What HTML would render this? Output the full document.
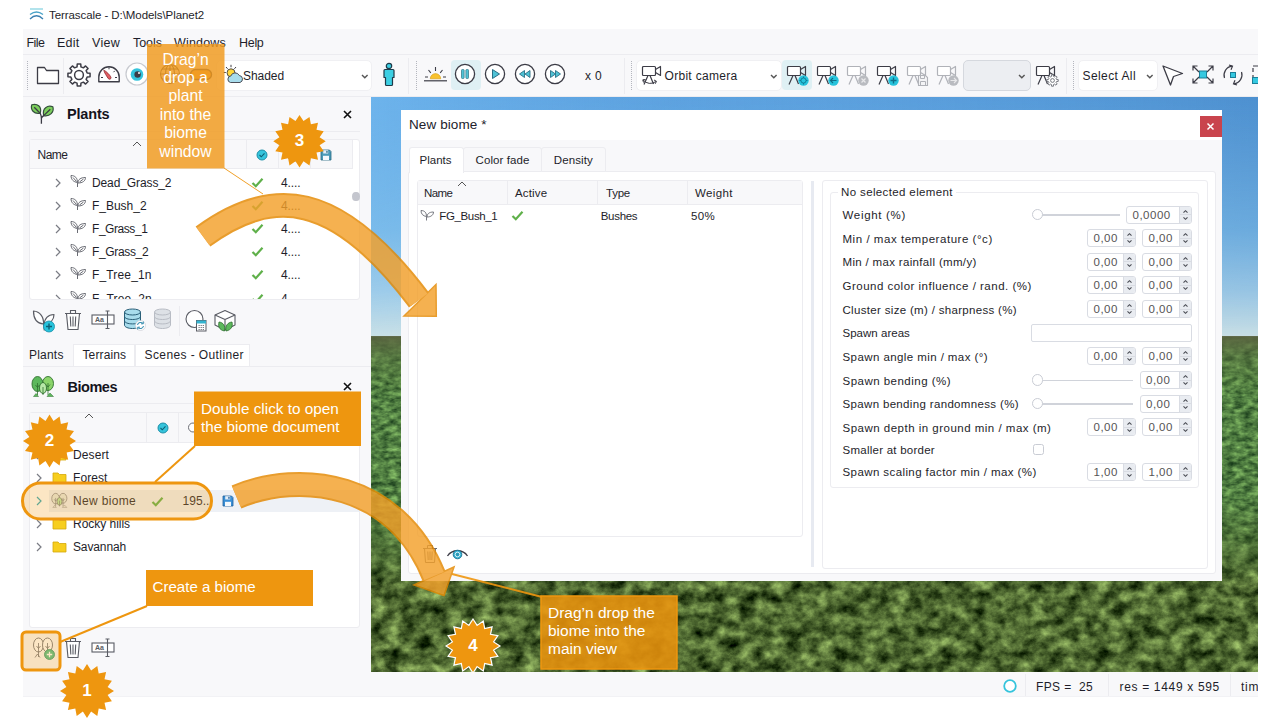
<!DOCTYPE html>
<html><head><meta charset="utf-8"><title>Terrascale</title>
<style>
*{box-sizing:border-box;margin:0;padding:0}
html,body{width:1280px;height:720px;overflow:hidden;background:#fff}
body{font-family:"Liberation Sans","DejaVu Sans",sans-serif;font-size:12px;color:#1e1e2a;position:relative}
.a{position:absolute}
.t{position:absolute;white-space:nowrap;letter-spacing:.3px}
.g{color:#555}
svg{position:absolute;overflow:visible}
.sp{position:absolute;height:18px;border:1px solid #d9dce3;border-radius:3px;background:#fff;overflow:hidden}
.sp i{position:absolute;right:0;top:0;bottom:0;width:12.500px;background:#e9ecf1;border-left:1px solid #d9dce3}
.sp u{position:absolute;right:0;top:7.500px;width:12px;height:1px;background:#d9dce3}
.sp b{position:absolute;left:5.500px;top:0;font-weight:normal;font-size:11.5px;line-height:17px;color:#555;letter-spacing:.5px}
.sp svg{right:2.500px;top:1px}
.co{position:absolute;color:#fff;font-size:16.5px;line-height:18.3px;letter-spacing:0}
</style></head><body>
<svg width="0" height="0"><defs>
<filter id="fo" x="0" y="0" width="100%" height="100%" color-interpolation-filters="sRGB"><feTurbulence type="fractalNoise" baseFrequency="0.11 0.2" numOctaves="3" seed="4"/><feColorMatrix values="0.6 0 0 0 0.02  0.72 0 0 0 0.14  0.42 0 0 0 0.05  0 0 0 0 1"/></filter>
<filter id="fo2" x="0" y="0" width="100%" height="100%" color-interpolation-filters="sRGB"><feTurbulence type="fractalNoise" baseFrequency="0.065 0.085" numOctaves="5" seed="9"/><feColorMatrix values="0.85 0 0 0 -0.12  0.95 0 0 0 -0.07  0.6 0 0 0 -0.11  0 0 0 0 1"/></filter>
<linearGradient id="mg" x1="0" y1="0" x2="0" y2="1"><stop offset="0" stop-color="#fff" stop-opacity="0"/><stop offset=".5" stop-color="#fff" stop-opacity="1"/></linearGradient><linearGradient id="sg" x1="0" y1="0" x2="0" y2="1"><stop offset="0" stop-color="#fff"/><stop offset=".5" stop-color="#fff" stop-opacity=".55"/><stop offset="1" stop-color="#fff" stop-opacity=".05"/></linearGradient><mask id="sm"><rect width="887" height="242" fill="url(#sg)"/></mask><mask id="mk"><rect y="400" width="887" height="175" fill="url(#mg)"/></mask>
<linearGradient id="sky" x1="0" y1="0" x2="0" y2="1"><stop offset="0" stop-color="#5a9fdd"/><stop offset=".55" stop-color="#79b8e6"/><stop offset=".8" stop-color="#a2cde8"/><stop offset="1" stop-color="#cfe3e6"/></linearGradient>
<linearGradient id="skyh" x1="0" y1="0" x2="1" y2="0"><stop offset="0" stop-color="#7cc4f8" stop-opacity=".55"/><stop offset=".35" stop-color="#6ab0ec" stop-opacity=".15"/><stop offset="1" stop-color="#3f7fc0" stop-opacity=".45"/></linearGradient>
<linearGradient id="haze" x1="0" y1="0" x2="0" y2="1"><stop offset="0" stop-color="#5a6340" stop-opacity=".95"/><stop offset=".35" stop-color="#5a7040" stop-opacity=".5"/><stop offset="1" stop-color="#5a7a3a" stop-opacity="0"/></linearGradient>
</defs></svg>

<svg style="left:29px;top:8px" width="15" height="12" viewBox="0 0 15 12"><path d="M1 1H14" stroke="#7fd0e0" stroke-width="1.2" fill="none"/><path d="M1 6.5Q7.5 1.5 14 6.5" stroke="#4aa3c8" stroke-width="1.3" fill="none"/><path d="M1 11Q7.5 4.5 14 11" stroke="#3b7fb0" stroke-width="1.3" fill="none"/></svg>
<div class="t" style="left:49px;top:6.5px;font-size:11.5px;line-height:16px;letter-spacing:-0.07px;">Terrascale - D:\Models\Planet2</div>
<div class="a" style="left:23px;top:29px;width:1235px;height:667px;background:#f8f8fa"></div>
<div class="t" style="left:26.5px;top:34.5px;font-size:12.5px;line-height:16px;letter-spacing:-0.54px;">File</div>
<div class="t" style="left:57px;top:34.5px;font-size:12.5px;line-height:16px;letter-spacing:0.24px;">Edit</div>
<div class="t" style="left:92px;top:34.5px;font-size:12.5px;line-height:16px;letter-spacing:0.28px;">View</div>
<div class="t" style="left:133px;top:34.5px;font-size:12.5px;line-height:16px;letter-spacing:-0.04px;">Tools</div>
<div class="t" style="left:174px;top:34.5px;font-size:12.5px;line-height:16px;letter-spacing:0.18px;">Windows</div>
<div class="t" style="left:239px;top:34.5px;font-size:12.5px;line-height:16px;letter-spacing:-0.3px;">Help</div>
<div class="a" style="left:23px;top:54px;width:1235px;height:1px;background:#ececf0"></div>
<div class="a" style="left:23px;top:96px;width:1235px;height:1px;background:#ececf0"></div>
<svg style="left:371px;top:97px" width="887" height="575" viewBox="0 0 887 575"><rect width="887" height="242" fill="url(#sky)"/><rect width="887" height="242" fill="url(#skyh)" mask="url(#sm)"/><rect y="240" width="887" height="335" filter="url(#fo)"/><g mask="url(#mk)"><rect y="400" width="887" height="175" filter="url(#fo2)"/></g><rect y="239" width="887" height="60" fill="url(#haze)"/></svg>
<div class="a" style="left:27px;top:61px;width:0;height:29px;border-left:1px dotted #b4b6be"></div>
<svg style="left:36px;top:64px;" width="24" height="22" viewBox="0 0 24 22"><path d="M1.5 3.5H8.5L10.5 6.5H22.5V19.5H1.5Z" fill="#fff" stroke="#3c3c46" stroke-width="1.3" stroke-linejoin="round"/></svg>
<div class="a" style="left:63px;top:58px;width:1px;height:36px;background:#ececf0"></div>
<svg style="left:67px;top:63px;" width="24" height="24" viewBox="0 0 24 24"><path d="M20.17,10.04L23.06,10.25L23.06,13.75L20.17,13.96L19.16,16.39L21.06,18.58L18.58,21.06L16.39,19.16L13.96,20.17L13.75,23.06L10.25,23.06L10.04,20.17L7.61,19.16L5.42,21.06L2.94,18.58L4.84,16.39L3.83,13.96L0.94,13.75L0.94,10.25L3.83,10.04L4.84,7.61L2.94,5.42L5.42,2.94L7.61,4.84L10.04,3.83L10.25,0.94L13.75,0.94L13.96,3.83L16.39,4.84L18.58,2.94L21.06,5.42L19.16,7.61Z" fill="#fff" stroke="#3c3c46" stroke-width="1.500" stroke-linejoin="round"/><circle cx="12" cy="12" r="4.400" fill="#fff" stroke="#3c3c46" stroke-width="1.500"/></svg>
<svg style="left:97px;top:64px;" width="24" height="22" viewBox="0 0 24 22"><path d="M1.800 17.800V13A10.200 10.200 0 0 1 22.200 13V17.800Z" fill="#fff" stroke="#3c3c46" stroke-width="1.400" stroke-linejoin="round"/><path d="M6.800 6.300C8.500 6.500 13.500 11.500 14 13.500C14.300 15 12.300 16 11.200 14.500C10 12.800 7 8 6.800 6.300Z" fill="#e35d62" stroke="#8a2a30" stroke-width=".8"/><path d="M12 3.200V5.300M4 13.500H6M20 13.500H18M17.800 6.800L16.500 8.200" stroke="#3c3c46" stroke-width="1"/></svg>
<svg style="left:125px;top:62px;" width="24" height="24" viewBox="0 0 24 24"><circle cx="12" cy="12" r="11" fill="#fff" stroke="#c8cad0" stroke-width="1.2"/><circle cx="12" cy="12.5" r="6.3" fill="#35c4dc"/><circle cx="12.6" cy="12.5" r="3.2" fill="#3c3c46"/><circle cx="14" cy="11" r="1" fill="#fff"/></svg>
<svg style="left:159px;top:63px;" width="22" height="22" viewBox="0 0 22 22"><g fill="none" stroke="#3c3c46" stroke-width="1.1"><circle cx="11" cy="11" r="9.5"/><ellipse cx="11" cy="11" rx="4.5" ry="9.5"/><path d="M1.5 11H20.5M11 1.5V20.5M3 6H19M3 16H19"/></g></svg>
<svg style="left:189px;top:68px;" width="24" height="14" viewBox="0 0 24 14"><rect x="1.5" y="1.5" width="21" height="10" rx="5" fill="#f3a43c" stroke="#3c3c46" stroke-width="1.4"/></svg>
<div class="a" style="left:216px;top:60px;width:156px;height:31px;background:#fff;border:1px solid #f0f0f3;border-radius:5px"></div>
<svg style="left:223px;top:64px;" width="22" height="20" viewBox="0 0 22 20"><g stroke="#3c3c46" stroke-width="1" fill="none"><path d="M3 3L4.600 4.800M8 0.800V3.200M13 3L11.400 4.800M0.500 8.500H2.800"/></g><circle cx="8" cy="8.800" r="4" fill="#ffd83a" stroke="#3c3c46" stroke-width=".9"/><path d="M7.500 18.500A3.300 3.300 0 0 1 7.800 12A4.600 4.600 0 0 1 16.300 11.500A3.600 3.600 0 0 1 17 18.500Z" fill="#a8dcec" stroke="#3c3c46" stroke-width=".9"/></svg>
<div class="t" style="left:243px;top:68.0px;font-size:12px;line-height:16px;letter-spacing:-0.06px;">Shaded</div>
<svg style="left:361px;top:73.5px;" width="8" height="6" viewBox="0 0 8 6"><path d="M1 1L3.800 3.800L6.600 1" fill="none" stroke="#555" stroke-width="1.400"/></svg>
<svg style="left:381px;top:62px;" width="16" height="25" viewBox="0 0 16 25"><circle cx="8" cy="4" r="2.7" fill="#3ccfe3" stroke="#1f3a48" stroke-width="1.2"/><path d="M3 8.5Q3 7.5 4 7.5H12Q13 7.5 13 8.5V15.5H11.5V22.5Q11.5 23.5 10.5 23.5H5.5Q4.5 23.5 4.5 22.5V15.5H3Z" fill="#3ccfe3" stroke="#1f3a48" stroke-width="1.2" stroke-linejoin="round"/></svg>
<div class="a" style="left:408px;top:58px;width:1px;height:36px;background:#ececf0"></div>
<div class="a" style="left:416px;top:61px;width:0;height:29px;border-left:1px dotted #b4b6be"></div>
<svg style="left:423px;top:64px;" width="25" height="18" viewBox="0 0 25 18"><path d="M1 16.8H24" stroke="#3c3c46" stroke-width="1.2"/><path d="M7.3 14.8A5.2 5.2 0 0 1 17.7 14.8Z" fill="#f9c22e" stroke="#d49a10" stroke-width=".6"/><path d="M12.5 3V7M5.5 6L7.8 8.8M19.5 6L17.2 8.8M2 13H5M23 13H20" stroke="#3c3c46" stroke-width="1.1"/></svg>
<div class="a" style="left:451px;top:60px;width:30px;height:30px;background:#dff0f4;border-radius:4px"></div>
<svg style="left:454px;top:63px;" width="22" height="22" viewBox="0 0 22 22"><circle cx="11" cy="11" r="9.6" fill="#fff" stroke="#3c3c46" stroke-width="1.3"/><rect x="7.5" y="6.5" width="2.6" height="9" rx=".8" fill="#4fc3d6" stroke="#3a7f90" stroke-width=".8"/><rect x="11.9" y="6.5" width="2.6" height="9" rx=".8" fill="#4fc3d6" stroke="#3a7f90" stroke-width=".8"/></svg>
<svg style="left:484px;top:63px;" width="22" height="22" viewBox="0 0 22 22"><circle cx="11" cy="11" r="9.6" fill="#fff" stroke="#3c3c46" stroke-width="1.3"/><path d="M8.5 6.5L15.5 11L8.5 15.5Z" fill="#4fc3d6" stroke="#2a6f86" stroke-width="1" stroke-linejoin="round"/></svg>
<svg style="left:514px;top:63px;" width="22" height="22" viewBox="0 0 22 22"><circle cx="11" cy="11" r="9.6" fill="#fff" stroke="#3c3c46" stroke-width="1.3"/><path d="M10.5 7.5L5.5 11L10.5 14.5ZM16 7.5L11 11L16 14.5Z" fill="#4fc3d6" stroke="#2a6f86" stroke-width=".9" stroke-linejoin="round"/></svg>
<svg style="left:544px;top:63px;" width="22" height="22" viewBox="0 0 22 22"><circle cx="11" cy="11" r="9.6" fill="#fff" stroke="#3c3c46" stroke-width="1.3"/><path d="M6.5 7.5L11.5 11L6.5 14.5ZM11.5 7.5L16.5 11L11.5 14.5Z" fill="#4fc3d6" stroke="#2a6f86" stroke-width=".9" stroke-linejoin="round"/></svg>
<div class="t" style="left:585px;top:68.0px;font-size:12px;line-height:16px;letter-spacing:0.33px;">x 0</div>
<div class="a" style="left:624px;top:58px;width:1px;height:36px;background:#ececf0"></div>
<div class="a" style="left:631px;top:61px;width:0;height:29px;border-left:1px dotted #b4b6be"></div>
<div class="a" style="left:636px;top:60px;width:146px;height:31px;background:#fff;border:1px solid #f0f0f3;border-radius:5px"></div>
<svg style="left:641px;top:65px;" width="24" height="22" viewBox="0 0 24 22"><g fill="none" stroke="#3c3c46" stroke-width="1.2" stroke-linejoin="round"><rect x="1.5" y="1.5" width="13" height="9" rx="1" fill="#fff"/><path d="M14.5 4.5L19.5 1.5V10.5L14.5 7.5"/><path d="M7 10.5L3 19.5M9 10.5L12.5 19"/></g><g fill="none" stroke="#3c3c46" stroke-width="1"><path d="M2 15Q8 21 15 16.5"/><path d="M13 15L15.5 16.3L14.2 18.8"/><path d="M2.5 17.5L1.8 14.8L4.5 14.5"/></g></svg>
<div class="t" style="left:664.5px;top:68.0px;font-size:12px;line-height:16px;letter-spacing:0.3px;">Orbit camera</div>
<svg style="left:770px;top:73.5px;" width="8" height="6" viewBox="0 0 8 6"><path d="M1 1L3.800 3.800L6.600 1" fill="none" stroke="#555" stroke-width="1.400"/></svg>
<div class="a" style="left:782px;top:60px;width:30px;height:30px;background:#dff0f4;border-radius:4px"></div>
<svg style="left:786px;top:65px;" width="24" height="22" viewBox="0 0 24 22"><g fill="none" stroke="#3c3c46" stroke-width="1.2" stroke-linejoin="round"><rect x="1.5" y="1.5" width="13" height="9" rx="1" fill="#fff"/><path d="M14.5 4.5L19.5 1.5V10.5L14.5 7.5"/><path d="M7 10.5L3 19.5M9 10.5L12.5 19"/></g><circle cx="17.5" cy="15.5" r="5.2" fill="#27c3dc"/><circle cx="17.5" cy="15.5" r="2.6" fill="none" stroke="#0f7f98" stroke-width="1"/><path d="M17.5 11.5V13M17.5 18V19.5M13.5 15.5H15M20 15.5H21.5" stroke="#0f7f98" stroke-width="1"/></svg>
<svg style="left:816px;top:65px;" width="24" height="22" viewBox="0 0 24 22"><g fill="none" stroke="#3c3c46" stroke-width="1.2" stroke-linejoin="round"><rect x="1.5" y="1.5" width="13" height="9" rx="1" fill="#fff"/><path d="M14.5 4.5L19.5 1.5V10.5L14.5 7.5"/><path d="M7 10.5L3 19.5M9 10.5L12.5 19"/></g><circle cx="17.5" cy="15.5" r="5.2" fill="#27c3dc"/><path d="M20.5 15.5H14.8M17 13L14.5 15.5L17 18" fill="none" stroke="#0f6f88" stroke-width="1.2"/></svg>
<svg style="left:846px;top:65px;" width="24" height="22" viewBox="0 0 24 22"><g fill="none" stroke="#b0b2b8" stroke-width="1.2" stroke-linejoin="round"><rect x="1.5" y="1.5" width="13" height="9" rx="1" fill="#fff"/><path d="M14.5 4.5L19.5 1.5V10.5L14.5 7.5"/><path d="M7 10.5L3 19.5M9 10.5L12.5 19"/></g><circle cx="17.5" cy="15.5" r="5.2" fill="#b9bbc0"/><path d="M15.5 13.5L19.5 17.5M19.5 13.5L15.5 17.5" stroke="#e8e8ea" stroke-width="1.2"/></svg>
<svg style="left:876px;top:65px;" width="24" height="22" viewBox="0 0 24 22"><g fill="none" stroke="#3c3c46" stroke-width="1.2" stroke-linejoin="round"><rect x="1.5" y="1.5" width="13" height="9" rx="1" fill="#fff"/><path d="M14.5 4.5L19.5 1.5V10.5L14.5 7.5"/><path d="M7 10.5L3 19.5M9 10.5L12.5 19"/></g><circle cx="17.5" cy="15.5" r="5.2" fill="#27c3dc"/><path d="M17.5 12.5V18.5M14.5 15.5H20.5" stroke="#0f6f88" stroke-width="1.4"/></svg>
<svg style="left:906px;top:65px;" width="24" height="22" viewBox="0 0 24 22"><g fill="none" stroke="#b0b2b8" stroke-width="1.2" stroke-linejoin="round"><rect x="1.5" y="1.5" width="13" height="9" rx="1" fill="#fff"/><path d="M14.5 4.5L19.5 1.5V10.5L14.5 7.5"/><path d="M7 10.5L3 19.5M9 10.5L12.5 19"/></g><path d="M12.5 10.5H19.5L21.5 12.5V20.5H12.5Z" fill="#f4f4f6" stroke="#b0b2b8" stroke-width="1.1"/><path d="M14.5 10.5V13.5H18.5V10.5M14.5 20.5V16.5H19.5V20.5" fill="none" stroke="#b0b2b8" stroke-width="1"/></svg>
<svg style="left:936px;top:65px;" width="24" height="22" viewBox="0 0 24 22"><g fill="none" stroke="#b0b2b8" stroke-width="1.2" stroke-linejoin="round"><rect x="1.5" y="1.5" width="13" height="9" rx="1" fill="#fff"/><path d="M14.5 4.5L19.5 1.5V10.5L14.5 7.5"/><path d="M7 10.5L3 19.5M9 10.5L12.5 19"/></g><circle cx="17.5" cy="15.5" r="5.2" fill="#b9bbc0"/><path d="M14.5 15.5H20.2M18 13L20.5 15.5L18 18" fill="none" stroke="#e8e8ea" stroke-width="1.2"/></svg>
<div class="a" style="left:963px;top:60px;width:68px;height:31px;background:#eceef2;border:1px solid #d5d8de;border-radius:5px"></div>
<svg style="left:1018px;top:73.5px;" width="8" height="6" viewBox="0 0 8 6"><path d="M1 1L3.800 3.800L6.600 1" fill="none" stroke="#555" stroke-width="1.400"/></svg>
<svg style="left:1035px;top:65px;" width="24" height="22" viewBox="0 0 24 22"><g fill="none" stroke="#3c3c46" stroke-width="1.2" stroke-linejoin="round"><rect x="1.5" y="1.5" width="13" height="9" rx="1" fill="#fff"/><path d="M14.5 4.5L19.5 1.5V10.5L14.5 7.5"/><path d="M7 10.5L3 19.5M9 10.5L12.5 19"/></g><g transform="translate(17.5,15.5)"><path d="M4.08,-0.98L5.73,-0.91L5.73,0.91L4.08,0.98L3.58,2.19L4.69,3.41L3.41,4.69L2.19,3.58L0.98,4.08L0.91,5.73L-0.91,5.73L-0.98,4.08L-2.19,3.58L-3.41,4.69L-4.69,3.41L-3.58,2.19L-4.08,0.98L-5.73,0.91L-5.73,-0.91L-4.08,-0.98L-3.58,-2.19L-4.69,-3.41L-3.41,-4.69L-2.19,-3.58L-0.98,-4.08L-0.91,-5.73L0.91,-5.73L0.98,-4.08L2.19,-3.58L3.41,-4.69L4.69,-3.41L3.58,-2.19Z" fill="#fff" stroke="#6a6c74" stroke-width=".9"/><circle r="1.9" fill="#fff" stroke="#6a6c74" stroke-width=".9"/></g></svg>
<div class="a" style="left:1066px;top:58px;width:1px;height:36px;background:#ececf0"></div>
<div class="a" style="left:1073px;top:61px;width:0;height:29px;border-left:1px dotted #b4b6be"></div>
<div class="a" style="left:1078px;top:60px;width:80px;height:31px;background:#fff;border:1px solid #f0f0f3;border-radius:5px"></div>
<div class="t" style="left:1082.5px;top:68.0px;font-size:12px;line-height:16px;letter-spacing:0.41px;">Select All</div>
<svg style="left:1146px;top:73.5px;" width="8" height="6" viewBox="0 0 8 6"><path d="M1 1L3.800 3.800L6.600 1" fill="none" stroke="#555" stroke-width="1.400"/></svg>
<svg style="left:1161px;top:64px;" width="24" height="22" viewBox="0 0 24 22"><path d="M2 2L21.5 9.5L12.5 12.5L9.5 21Z" fill="#fff" stroke="#3c3c46" stroke-width="1.3" stroke-linejoin="round"/></svg>
<svg style="left:1191px;top:64px;" width="24" height="22" viewBox="0 0 24 22"><g fill="none" stroke="#3c3c46" stroke-width="1.2"><path d="M2 6.5V2H6.5M2 2L8 8M17.5 2H22V6.5M22 2L16 8M22 14.5V19H17.5M22 19L16 13M6.5 19H2V14.5M2 19L8 13"/></g><rect x="8.5" y="7" width="7" height="7" fill="#35c8e0" stroke="#1b7f98" stroke-width="1"/></svg>
<svg style="left:1221px;top:63px;" width="24" height="24" viewBox="0 0 24 24"><g fill="none" stroke="#3c3c46" stroke-width="1.2"><path d="M3.5 15A9 9 0 0 1 11 3.2M20.5 9A9 9 0 0 1 13 20.8"/><path d="M8 2L11.5 3.2L10 6.8M16 22L12.5 20.8L14 17.2"/></g><rect x="9.5" y="9.5" width="5" height="5" fill="#35c8e0" stroke="#1b7f98" stroke-width="1"/></svg>
<svg style="left:1251px;top:64px;overflow:hidden" width="7" height="22" viewBox="0 0 7 22"><path d="M7 2H2V8M2 11V13" fill="none" stroke="#3c3c46" stroke-width="1.2" stroke-dasharray="5 2"/><rect x="1.5" y="13.5" width="8" height="6" fill="#35c8e0" stroke="#1b7f98" stroke-width="1"/></svg>
<svg style="left:31px;top:103px;" width="24" height="24" viewBox="0 0 24 24"><g stroke="#34503c" stroke-width="1.200" stroke-linejoin="round"><path d="M0.800 1.800C6 0 11.200 3.500 9.200 10.200C2.800 11.500 -0.800 6.500 0.800 1.800Z" fill="#7ccf5c"/><path d="M21.900 3.800C16.500 1.800 11 5.500 12.700 12.600C19 13.800 23.300 9 21.900 3.800Z" fill="#7ccf5c"/><path d="M3.200 4.200L9.200 10.200C10 11.800 10.400 13.500 10.400 15.500M19.300 6.300L12.700 12.600C11.500 13.400 10.600 14.200 10.400 15.500V20.800" fill="none" stroke="#3c3c46" stroke-width="1.300"/></g></svg>
<div class="t" style="left:67px;top:106.0px;font-size:14.5px;line-height:16px;letter-spacing:-0.17px;font-weight:bold;color:#14141c;">Plants</div>
<svg style="left:343px;top:109.5px;" width="9" height="9" viewBox="0 0 9 9"><path d="M1 1L8 8M8 1L1 8" stroke="#111" stroke-width="1.6"/></svg>
<div class="a" style="left:29px;top:130.5px;width:331px;height:1px;background:#ececf0"></div>
<div class="a" style="left:29px;top:139px;width:331px;height:161px;background:#fff;border:1px solid #ececf0;border-radius:3px"></div>
<div class="a" style="left:30px;top:140px;width:322px;height:29px;background:#f8f8fa;border-bottom:1px solid #ececf0"></div>
<div class="t" style="left:37.5px;top:147.0px;font-size:12px;line-height:16px;letter-spacing:-0.5px;">Name</div>
<svg style="left:132px;top:141px;" width="10" height="6" viewBox="0 0 10 6"><path d="M1 5L5 1L9 5" fill="none" stroke="#555" stroke-width="1"/></svg>
<div class="a" style="left:246px;top:140px;width:1px;height:29px;background:#ececf0"></div>
<div class="a" style="left:278px;top:140px;width:1px;height:29px;background:#ececf0"></div>
<div class="a" style="left:310px;top:140px;width:1px;height:29px;background:#ececf0"></div>
<div class="a" style="left:352px;top:140px;width:1px;height:29px;background:#ececf0"></div>
<svg style="left:256px;top:149px;" width="12" height="12" viewBox="0 0 12 12"><circle cx="6" cy="6" r="5" fill="#35c4dc" stroke="#1b8fa8" stroke-width="1"/><path d="M3.5 6L5.3 7.8L8.5 4.3" fill="none" stroke="#0d5f74" stroke-width="1.1"/></svg>
<svg style="left:285px;top:149px;" width="14" height="12" viewBox="0 0 14 12"><circle cx="6" cy="5.5" r="4.5" fill="#fff" stroke="#6a6c74" stroke-width="1"/><path d="M8 9H13V12H8Z" fill="#8ad" stroke="#6a6c74" stroke-width=".6"/></svg>
<svg style="left:320px;top:149px;" width="12" height="12" viewBox="0 0 12 12"><path d="M1 1H9.500L11 2.500V11H1Z" fill="#4a9ab8" stroke="#2a6a84" stroke-width=".8"/><rect x="3.200" y="1.200" width="5" height="3.300" fill="#e4eef8"/><rect x="6.300" y="1.800" width="1.300" height="2" fill="#2a6a84"/><rect x="3" y="6.800" width="6" height="4.200" fill="#f4f8fc"/></svg>
<div class="a" style="left:30px;top:169px;width:329px;height:130px;overflow:hidden">
<svg style="left:25px;top:9.0px" width="6" height="10" viewBox="0 0 6 10"><path d="M1 1L5 5L1 9" fill="none" stroke="#7a7c84" stroke-width="1.2"/></svg>
<svg style="left:40px;top:5.0px" width="17" height="14" viewBox="0 0 17 14"><g fill="none" stroke="#6a6c74" stroke-width="1"><path d="M7.5 13V8.5"/><path d="M7.5 8.5C7.5 4 5 1.5 1 1.5C1 5.5 3.5 8 7.5 8.5Z"/><path d="M8 9C8 5.5 10.5 3.5 15.5 3.5C15.5 7 12.5 9 8 9Z"/><path d="M3 3.5L6.5 7.500M13.500 5L9.500 8"/></g></svg>
<div class="t" style="left:62px;top:6.0px;font-size:12px;line-height:16px;letter-spacing:-0.11px">Dead_Grass_2</div>
<svg style="left:221px;top:8.0px" width="13" height="11" viewBox="0 0 13 11"><path d="M1.5 6L4.8 9.2L11.5 1.8" fill="none" stroke="#5fb04a" stroke-width="2.2"/></svg>
<div class="t" style="left:251px;top:6.0px;font-size:12px;line-height:16px;letter-spacing:-.1px">4....</div>
<svg style="left:25px;top:32.1px" width="6" height="10" viewBox="0 0 6 10"><path d="M1 1L5 5L1 9" fill="none" stroke="#7a7c84" stroke-width="1.2"/></svg>
<svg style="left:40px;top:28.1px" width="17" height="14" viewBox="0 0 17 14"><g fill="none" stroke="#6a6c74" stroke-width="1"><path d="M7.5 13V8.5"/><path d="M7.5 8.5C7.5 4 5 1.5 1 1.5C1 5.5 3.5 8 7.5 8.5Z"/><path d="M8 9C8 5.5 10.5 3.5 15.5 3.5C15.5 7 12.5 9 8 9Z"/><path d="M3 3.5L6.5 7.500M13.500 5L9.500 8"/></g></svg>
<div class="t" style="left:62px;top:29.1px;font-size:12px;line-height:16px;letter-spacing:-0.02px">F_Bush_2</div>
<svg style="left:221px;top:31.1px" width="13" height="11" viewBox="0 0 13 11"><path d="M1.5 6L4.8 9.2L11.5 1.8" fill="none" stroke="#5fb04a" stroke-width="2.2"/></svg>
<div class="t" style="left:251px;top:29.1px;font-size:12px;line-height:16px;letter-spacing:-.1px">4....</div>
<svg style="left:25px;top:55.2px" width="6" height="10" viewBox="0 0 6 10"><path d="M1 1L5 5L1 9" fill="none" stroke="#7a7c84" stroke-width="1.2"/></svg>
<svg style="left:40px;top:51.2px" width="17" height="14" viewBox="0 0 17 14"><g fill="none" stroke="#6a6c74" stroke-width="1"><path d="M7.5 13V8.5"/><path d="M7.5 8.5C7.5 4 5 1.5 1 1.5C1 5.5 3.5 8 7.5 8.5Z"/><path d="M8 9C8 5.5 10.5 3.5 15.5 3.5C15.5 7 12.5 9 8 9Z"/><path d="M3 3.5L6.5 7.500M13.500 5L9.500 8"/></g></svg>
<div class="t" style="left:62px;top:52.2px;font-size:12px;line-height:16px;letter-spacing:-0.44px">F_Grass_1</div>
<svg style="left:221px;top:54.2px" width="13" height="11" viewBox="0 0 13 11"><path d="M1.5 6L4.8 9.2L11.5 1.8" fill="none" stroke="#5fb04a" stroke-width="2.2"/></svg>
<div class="t" style="left:251px;top:52.2px;font-size:12px;line-height:16px;letter-spacing:-.1px">4....</div>
<svg style="left:25px;top:78.3px" width="6" height="10" viewBox="0 0 6 10"><path d="M1 1L5 5L1 9" fill="none" stroke="#7a7c84" stroke-width="1.2"/></svg>
<svg style="left:40px;top:74.3px" width="17" height="14" viewBox="0 0 17 14"><g fill="none" stroke="#6a6c74" stroke-width="1"><path d="M7.5 13V8.5"/><path d="M7.5 8.5C7.5 4 5 1.5 1 1.5C1 5.5 3.5 8 7.5 8.5Z"/><path d="M8 9C8 5.5 10.5 3.5 15.5 3.5C15.5 7 12.5 9 8 9Z"/><path d="M3 3.5L6.5 7.500M13.500 5L9.500 8"/></g></svg>
<div class="t" style="left:62px;top:75.3px;font-size:12px;line-height:16px;letter-spacing:-0.35px">F_Grass_2</div>
<svg style="left:221px;top:77.3px" width="13" height="11" viewBox="0 0 13 11"><path d="M1.5 6L4.8 9.2L11.5 1.8" fill="none" stroke="#5fb04a" stroke-width="2.2"/></svg>
<div class="t" style="left:251px;top:75.3px;font-size:12px;line-height:16px;letter-spacing:-.1px">4....</div>
<svg style="left:25px;top:101.4px" width="6" height="10" viewBox="0 0 6 10"><path d="M1 1L5 5L1 9" fill="none" stroke="#7a7c84" stroke-width="1.2"/></svg>
<svg style="left:40px;top:97.4px" width="17" height="14" viewBox="0 0 17 14"><g fill="none" stroke="#6a6c74" stroke-width="1"><path d="M7.5 13V8.5"/><path d="M7.5 8.5C7.5 4 5 1.5 1 1.5C1 5.5 3.5 8 7.5 8.5Z"/><path d="M8 9C8 5.5 10.5 3.5 15.5 3.5C15.5 7 12.5 9 8 9Z"/><path d="M3 3.5L6.5 7.500M13.500 5L9.500 8"/></g></svg>
<div class="t" style="left:62px;top:98.4px;font-size:12px;line-height:16px;letter-spacing:0.15px">F_Tree_1n</div>
<svg style="left:221px;top:100.4px" width="13" height="11" viewBox="0 0 13 11"><path d="M1.5 6L4.8 9.2L11.5 1.8" fill="none" stroke="#5fb04a" stroke-width="2.2"/></svg>
<div class="t" style="left:251px;top:98.4px;font-size:12px;line-height:16px;letter-spacing:-.1px">4....</div>
<svg style="left:25px;top:124.5px" width="6" height="10" viewBox="0 0 6 10"><path d="M1 1L5 5L1 9" fill="none" stroke="#7a7c84" stroke-width="1.2"/></svg>
<svg style="left:40px;top:120.5px" width="17" height="14" viewBox="0 0 17 14"><g fill="none" stroke="#6a6c74" stroke-width="1"><path d="M7.5 13V8.5"/><path d="M7.5 8.5C7.5 4 5 1.5 1 1.5C1 5.5 3.5 8 7.5 8.5Z"/><path d="M8 9C8 5.5 10.5 3.5 15.5 3.5C15.5 7 12.5 9 8 9Z"/><path d="M3 3.5L6.5 7.500M13.500 5L9.500 8"/></g></svg>
<div class="t" style="left:62px;top:121.5px;font-size:12px;line-height:16px;letter-spacing:0.19px">F_Tree_2n</div>
<svg style="left:221px;top:123.5px" width="13" height="11" viewBox="0 0 13 11"><path d="M1.5 6L4.8 9.2L11.5 1.8" fill="none" stroke="#5fb04a" stroke-width="2.2"/></svg>
<div class="t" style="left:251px;top:121.5px;font-size:12px;line-height:16px;letter-spacing:-.1px">4....</div>
</div>
<div class="a" style="left:352.3px;top:191.5px;width:7.7px;height:9.8px;background:#c4c6ce;border-radius:50%"></div>
<svg style="left:32px;top:309px;" width="24" height="24" viewBox="0 0 24 24"><g fill="#fff" stroke="#5a5c64" stroke-width="1.200" stroke-linejoin="round"><path d="M11.500 15C5 14.500 1.500 9.500 1.500 2C8 2.500 12 8 11.500 15Z"/><path d="M12.500 15.500C12 10 16 5.500 22 5.500C22 10.500 18.500 14.500 12.500 15.500Z"/><path d="M11.500 15L12.300 21.500" fill="none"/></g><circle cx="17" cy="17.500" r="5.500" fill="#27c3dc" stroke="#1b8fa8" stroke-width=".8"/><path d="M17 14.500V20.500M14 17.500H20" stroke="#0d5f74" stroke-width="1.4"/></svg>
<svg style="left:64px;top:309px;" width="18" height="22" viewBox="0 0 18 22"><g fill="#fff" stroke="#5a5c64" stroke-width="1.1"><path d="M2.500 4.500H15.500L14 20.500H4Z"/><path d="M1 4.500H17M6.500 4V1.500H11.500V4" fill="none"/><path d="M6.300 7.500L6.800 17.500M9 7.500V17.500M11.700 7.500L11.200 17.500" fill="none"/></g></svg>
<svg style="left:91px;top:310px;" width="24" height="20" viewBox="0 0 24 20"><g fill="none" stroke="#5a5c64" stroke-width="1.1"><rect x="1" y="5" width="22" height="9" fill="#fff"/><path d="M16.500 1V18.500M14.500 1H18.500M14.500 18.500H18.500" /></g><text x="4" y="12.300" font-size="7" font-family="Liberation Sans,sans-serif" font-weight="bold" fill="#5a5c64">Aa</text></svg>
<svg style="left:123px;top:308px;" width="24" height="24" viewBox="0 0 24 24"><g fill="#a8dcec" stroke="#2a5f78" stroke-width="1"><path d="M1.500 4V17C1.500 19 5 20.500 9.500 20.500C14 20.500 17.500 19 17.500 17V4"/><ellipse cx="9.500" cy="4" rx="8" ry="3"/><path d="M1.500 8.300C1.500 10.300 5 11.500 9.500 11.500C14 11.500 17.500 10.300 17.500 8.300M1.500 12.600C1.500 14.600 5 15.900 9.500 15.900C14 15.900 17.500 14.600 17.500 12.600" fill="none"/></g><circle cx="17.500" cy="17.500" r="5" fill="#fff" stroke="#c8cad0" stroke-width=".6"/><path d="M14.500 17A3.200 3.200 0 0 1 20 15.500M20.500 18A3.200 3.200 0 0 1 15 19.500" fill="none" stroke="#3a8fb0" stroke-width="1.100"/><path d="M20.300 13.500V15.800H18M14.700 21.500V19.200H17" fill="none" stroke="#3a8fb0" stroke-width="1"/></svg>
<svg style="left:153px;top:308px;" width="20" height="24" viewBox="0 0 20 24"><g fill="#dde1e6" stroke="#b8bcc4" stroke-width="1"><path d="M1.500 4V17C1.500 19 5 20.500 9.500 20.500C14 20.500 17.500 19 17.500 17V4"/><ellipse cx="9.500" cy="4" rx="8" ry="3"/><path d="M1.500 8.300C1.500 10.300 5 11.500 9.500 11.500C14 11.500 17.500 10.300 17.500 8.300M1.500 12.600C1.500 14.600 5 15.900 9.500 15.900C14 15.900 17.500 14.600 17.500 12.600" fill="none"/></g></svg>
<div class="a" style="left:179px;top:306px;width:1px;height:30px;background:#ececf0"></div>
<svg style="left:185px;top:309px;" width="24" height="24" viewBox="0 0 24 24"><circle cx="9.500" cy="10" r="8.500" fill="#fff" stroke="#5a5c64" stroke-width="1.100"/><rect x="11.500" y="11.500" width="9.500" height="10.500" fill="#fff" stroke="#5a5c64" stroke-width="1"/><rect x="11.500" y="11.500" width="9.500" height="3" fill="#35b4d0"/><path d="M13.500 16.500H19M13.500 18.500H19M13.500 20.500H19" stroke="#5a5c64" stroke-width=".8" stroke-dasharray="1.300 .8"/></svg>
<svg style="left:213px;top:309px;" width="26" height="24" viewBox="0 0 26 24"><g fill="#fff" stroke="#5a5c64" stroke-width="1.100" stroke-linejoin="round"><path d="M12 1.500L22 6V16L12 21L2 16V6Z"/><path d="M2 6L12 10.500L22 6M12 10.500V21" fill="none"/></g><path d="M11.500 22C6 21 5 17 6 13C10.500 13.500 12.500 17 11.500 22ZM13 22C18.500 21 20 17 19 13C14.500 13.500 12 17 13 22Z" fill="#5cb85c" stroke="#2f6f2f" stroke-width=".8"/></svg>
<div class="t" style="left:29px;top:346.5px;font-size:12px;line-height:16px;letter-spacing:0.21px;">Plants</div>
<div class="a" style="left:73px;top:344px;width:62px;height:22px;background:#fff;border:1px solid #ececf0;border-bottom:none"></div>
<div class="t" style="left:82.5px;top:347.0px;font-size:12px;line-height:16px;letter-spacing:0.12px;">Terrains</div>
<div class="a" style="left:135px;top:344px;width:115px;height:22px;background:#fff;border:1px solid #ececf0;border-bottom:none"></div>
<div class="t" style="left:144.5px;top:347.0px;font-size:12px;line-height:16px;letter-spacing:0.4px;">Scenes - Outliner</div>
<div class="a" style="left:23px;top:366px;width:348px;height:1px;background:#ececf0"></div>
<svg style="left:31px;top:376px;" width="24" height="22" viewBox="0 0 24 22"><g stroke="#2f6f2f" stroke-width=".9"><ellipse cx="17" cy="7.500" rx="5.500" ry="7" fill="#8bd46a"/><ellipse cx="6.500" cy="8" rx="5.500" ry="7.500" fill="#5cb85c"/><ellipse cx="12" cy="12" rx="3.500" ry="5.500" fill="#b8e8a8"/></g><path d="M6.500 7V19M17 7V19M12 11V19M4.500 9L6.500 11.500L8.500 9M15 8.500L17 11L19 8.500" stroke="#2f6f2f" stroke-width=".8" fill="none"/><path d="M2.500 20.500L5 17.500L7.500 20.500ZM16 20.500L19 17L22.500 20.500Z" fill="#5cb85c" stroke="#2f6f2f" stroke-width=".5"/></svg>
<div class="t" style="left:67.5px;top:378.5px;font-size:14.5px;line-height:16px;letter-spacing:-0.48px;font-weight:bold;color:#14141c;">Biomes</div>
<svg style="left:343px;top:382px;" width="9" height="9" viewBox="0 0 9 9"><path d="M1 1L8 8M8 1L1 8" stroke="#111" stroke-width="1.6"/></svg>
<div class="a" style="left:29px;top:403px;width:331px;height:1px;background:#ececf0"></div>
<div class="a" style="left:29px;top:412px;width:331px;height:216px;background:#fff;border:1px solid #ececf0;border-radius:3px"></div>
<div class="a" style="left:30px;top:413px;width:329px;height:30px;background:#f8f8fa;border-bottom:1px solid #ececf0"></div>
<svg style="left:84px;top:412.5px;" width="10" height="6" viewBox="0 0 10 6"><path d="M1 5L5 1L9 5" fill="none" stroke="#555" stroke-width="1"/></svg>
<div class="a" style="left:146px;top:413px;width:1px;height:30px;background:#ececf0"></div>
<div class="a" style="left:178px;top:413px;width:1px;height:30px;background:#ececf0"></div>
<div class="a" style="left:210px;top:413px;width:1px;height:30px;background:#ececf0"></div>
<svg style="left:157px;top:422px;" width="12" height="12" viewBox="0 0 12 12"><circle cx="6" cy="6" r="5" fill="#35c4dc" stroke="#1b8fa8" stroke-width="1"/><path d="M3.5 6L5.3 7.8L8.5 4.3" fill="none" stroke="#0d5f74" stroke-width="1.1"/></svg>
<svg style="left:187px;top:422px;" width="14" height="12" viewBox="0 0 14 12"><circle cx="6" cy="5.500" r="4.500" fill="#fff" stroke="#6a6c74" stroke-width="1"/></svg>
<div class="a" style="left:49px;top:490px;width:311px;height:22px;background:#eef1f6"></div>
<svg style="left:36px;top:450px;" width="6" height="10" viewBox="0 0 6 10"><path d="M1 1L5 5L1 9" fill="none" stroke="#7a7c84" stroke-width="1.2"/></svg>
<svg style="left:52px;top:449px;" width="15" height="12" viewBox="0 0 15 12"><path d="M1 1H6L7.500 2.500H14V11H1Z" fill="#f7ce1e" stroke="#d4a80a" stroke-width=".8"/></svg>
<div class="t" style="left:73px;top:447.0px;font-size:12px;line-height:16px;letter-spacing:0.11px;">Desert</div>
<svg style="left:36px;top:473px;" width="6" height="10" viewBox="0 0 6 10"><path d="M1 1L5 5L1 9" fill="none" stroke="#7a7c84" stroke-width="1.2"/></svg>
<svg style="left:52px;top:472px;" width="15" height="12" viewBox="0 0 15 12"><path d="M1 1H6L7.500 2.500H14V11H1Z" fill="#f7ce1e" stroke="#d4a80a" stroke-width=".8"/></svg>
<div class="t" style="left:73px;top:470.0px;font-size:12px;line-height:16px;letter-spacing:0.08px;">Forest</div>
<svg style="left:36px;top:496px;" width="6" height="10" viewBox="0 0 6 10"><path d="M1 1L5 5L1 9" fill="none" stroke="#2aa8b8" stroke-width="1.2"/></svg>
<svg style="left:51px;top:493px;" width="17" height="15.5" viewBox="0 0 24 22"><g stroke="#6a6c74" stroke-width=".9"><ellipse cx="17" cy="7.500" rx="5.500" ry="7" fill="#e4ebe4"/><ellipse cx="6.500" cy="8" rx="5.500" ry="7.500" fill="#e4ebe4"/><ellipse cx="12" cy="12" rx="3.500" ry="5.500" fill="#b8e8a8"/></g><path d="M6.500 7V19M17 7V19M12 11V19M4.500 9L6.500 11.500L8.500 9M15 8.500L17 11L19 8.500" stroke="#6a6c74" stroke-width=".8" fill="none"/><path d="M2.500 20.500L5 17.500L7.500 20.500ZM16 20.500L19 17L22.500 20.500Z" fill="#e4ebe4" stroke="#6a6c74" stroke-width=".5"/></svg>
<div class="t" style="left:73px;top:493.0px;font-size:12px;line-height:16px;letter-spacing:0.33px;">New biome</div>
<svg style="left:36px;top:519px;" width="6" height="10" viewBox="0 0 6 10"><path d="M1 1L5 5L1 9" fill="none" stroke="#7a7c84" stroke-width="1.2"/></svg>
<svg style="left:52px;top:518px;" width="15" height="12" viewBox="0 0 15 12"><path d="M1 1H6L7.500 2.500H14V11H1Z" fill="#f7ce1e" stroke="#d4a80a" stroke-width=".8"/></svg>
<div class="t" style="left:73px;top:516.0px;font-size:12px;line-height:16px;letter-spacing:-0.03px;">Rocky hills</div>
<svg style="left:36px;top:542px;" width="6" height="10" viewBox="0 0 6 10"><path d="M1 1L5 5L1 9" fill="none" stroke="#7a7c84" stroke-width="1.2"/></svg>
<svg style="left:52px;top:541px;" width="15" height="12" viewBox="0 0 15 12"><path d="M1 1H6L7.500 2.500H14V11H1Z" fill="#f7ce1e" stroke="#d4a80a" stroke-width=".8"/></svg>
<div class="t" style="left:73px;top:539.0px;font-size:12px;line-height:16px;letter-spacing:-0.13px;">Savannah</div>
<svg style="left:151px;top:496px;" width="13" height="11" viewBox="0 0 13 11"><path d="M1.5 6L4.8 9.2L11.5 1.8" fill="none" stroke="#5fb04a" stroke-width="2.2"/></svg>
<div class="t" style="left:182.5px;top:493.0px;font-size:12px;line-height:16px;letter-spacing:0.06px;">195..</div>
<svg style="left:222px;top:495px;" width="12" height="12" viewBox="0 0 12 12"><path d="M1 1H9.500L11 2.500V11H1Z" fill="#3a8fd6" stroke="#1f5f9c" stroke-width=".8"/><rect x="3.200" y="1.200" width="5" height="3.300" fill="#e4eef8"/><rect x="6.300" y="1.800" width="1.300" height="2" fill="#1f5f9c"/><rect x="3" y="6.800" width="6" height="4.200" fill="#f4f8fc"/></svg>
<svg style="left:32px;top:637px;" width="24" height="24" viewBox="0 0 24 24"><g stroke="#6a6c74" stroke-width=".9" fill="#fff"><ellipse cx="6.500" cy="8" rx="5" ry="7"/><ellipse cx="15.500" cy="8" rx="5" ry="7"/></g><path d="M6.500 6V20M15.500 6V20M4.500 9L6.500 11.500L8.500 9M13.500 9L15.500 11.500L17.500 9M3 20.500L5.500 17L8 20.500" stroke="#6a6c74" stroke-width=".8" fill="none"/><circle cx="17.500" cy="17.500" r="5" fill="#4fc08a" stroke="#2a8f68" stroke-width=".8"/><path d="M17.500 14.800V20.200M14.800 17.500H20.200" stroke="#fff" stroke-width="1.300"/></svg>
<svg style="left:64px;top:637px;" width="18" height="22" viewBox="0 0 18 22"><g fill="#fff" stroke="#5a5c64" stroke-width="1.1"><path d="M2.500 4.500H15.500L14 20.500H4Z"/><path d="M1 4.500H17M6.500 4V1.500H11.500V4" fill="none"/><path d="M6.300 7.500L6.800 17.500M9 7.500V17.500M11.700 7.500L11.200 17.500" fill="none"/></g></svg>
<svg style="left:91px;top:638px;" width="24" height="20" viewBox="0 0 24 20"><g fill="none" stroke="#5a5c64" stroke-width="1.1"><rect x="1" y="5" width="22" height="9" fill="#fff"/><path d="M16.500 1V18.500M14.500 1H18.500M14.500 18.500H18.500" /></g><text x="4" y="12.300" font-size="7" font-family="Liberation Sans,sans-serif" font-weight="bold" fill="#5a5c64">Aa</text></svg>
<div class="a" style="left:401px;top:110px;width:821px;height:470.5px;background:#f8f8fa"></div>
<div class="a" style="left:401px;top:110px;width:821px;height:30px;background:#fff"></div>
<div class="t" style="left:409px;top:117.0px;font-size:13.5px;line-height:16px;letter-spacing:0.1px;color:#22222c;">New biome *</div>
<div class="a" style="left:1200px;top:116px;width:22px;height:21px;background:#c9444d"></div>
<svg style="left:1206px;top:122px;" width="9" height="9" viewBox="0 0 9 9"><path d="M1.500 1.500L7.500 7.500M7.500 1.500L1.500 7.500" stroke="#fff" stroke-width="1.500"/></svg>
<div class="a" style="left:408px;top:171px;width:808px;height:403px;background:#fff;border:1px solid #ececf0;border-radius:3px"></div>
<div class="a" style="left:409px;top:147px;width:55px;height:26px;background:#fff;border:1px solid #ececf0;border-bottom:none;border-radius:3px 3px 0 0"></div>
<div class="a" style="left:463px;top:147px;width:79px;height:25px;background:#f8f8fa;border:1px solid #ececf0;border-radius:3px 3px 0 0"></div>
<div class="a" style="left:541px;top:147px;width:65px;height:25px;background:#f8f8fa;border:1px solid #ececf0;border-radius:3px 3px 0 0"></div>
<div class="t" style="left:419.5px;top:152.0px;font-size:11.5px;line-height:16px;letter-spacing:0.01px;">Plants</div>
<div class="t" style="left:475.5px;top:152.0px;font-size:11.5px;line-height:16px;letter-spacing:0.09px;">Color fade</div>
<div class="t" style="left:553.8px;top:152.0px;font-size:11.5px;line-height:16px;letter-spacing:0.09px;">Density</div>
<div class="a" style="left:417px;top:180px;width:386px;height:357px;background:#fff;border:1px solid #ececf0;border-radius:3px"></div>
<div class="a" style="left:418px;top:181px;width:384px;height:24px;background:#f8f8fa;border-bottom:1px solid #ececf0"></div>
<div class="a" style="left:507px;top:181px;width:1px;height:24px;background:#ececf0"></div>
<div class="a" style="left:597px;top:181px;width:1px;height:24px;background:#ececf0"></div>
<div class="a" style="left:687px;top:181px;width:1px;height:24px;background:#ececf0"></div>
<div class="t" style="left:424px;top:185.0px;font-size:11.5px;line-height:16px;letter-spacing:-0.57px;">Name</div>
<div class="t" style="left:515px;top:185.0px;font-size:11.5px;line-height:16px;letter-spacing:0.16px;">Active</div>
<div class="t" style="left:606px;top:185.0px;font-size:11.5px;line-height:16px;letter-spacing:-0.23px;">Type</div>
<div class="t" style="left:695px;top:185.0px;font-size:11.5px;line-height:16px;letter-spacing:0.35px;">Weight</div>
<svg style="left:457px;top:181px;" width="10" height="6" viewBox="0 0 10 6"><path d="M1 5L5 1L9 5" fill="none" stroke="#555" stroke-width="1"/></svg>
<svg style="left:420px;top:209px;" width="15" height="12" viewBox="0 0 15 12"><g fill="none" stroke="#6a6c74" stroke-width=".9"><path d="M6.500 11.500V7.500"/><path d="M6.500 7.500C6.500 3.500 4.500 1.500 1 1.500C1 5 3 7 6.500 7.500Z"/><path d="M7 8C7 5 9 3 13.500 3C13.500 6 11 8 7 8Z"/></g></svg>
<div class="t" style="left:439.3px;top:207.5px;font-size:11.5px;line-height:16px;letter-spacing:-0.37px;">FG_Bush_1</div>
<svg style="left:511px;top:210px;" width="13" height="11" viewBox="0 0 13 11"><path d="M1.500 6L4.800 9.200L11.500 1.800" fill="none" stroke="#5fb04a" stroke-width="2.200"/></svg>
<div class="t" style="left:600.7px;top:207.5px;font-size:11.5px;line-height:16px;letter-spacing:-0.29px;">Bushes</div>
<div class="t" style="left:691px;top:207.5px;font-size:11.5px;line-height:16px;letter-spacing:0.33px;">50%</div>
<svg style="left:422px;top:544px;" width="16" height="20" viewBox="0 0 16 20"><g fill="#fff" stroke="#6a6c74" stroke-width="1"><path d="M2.500 4.500H13.500L12.500 18.500H3.500Z"/><path d="M1 4.500H15M5.500 4V1.500H10.500V4" fill="none"/><path d="M5.800 7.500L6.200 16M8 7.500V16M10.200 7.500L9.800 16" fill="none"/></g></svg>
<svg style="left:446px;top:547px;" width="23" height="14" viewBox="0 0 23 14"><path d="M1.500 9C6 2 17 2 21.500 9" fill="none" stroke="#3c3c46" stroke-width="1.300"/><circle cx="11.500" cy="7.500" r="4.300" fill="#35b4d4" stroke="#1b6f90" stroke-width=".9"/><circle cx="11.500" cy="7.500" r="2.300" fill="#2a9ab8" stroke="#e8f6fa" stroke-width=".9"/></svg>
<div class="a" style="left:811px;top:181px;width:3px;height:386px;background:#e7eaf1"></div>
<div class="a" style="left:822px;top:180px;width:386px;height:389px;background:#fff;border:1px solid #ececf0;border-radius:3px"></div>
<div class="a" style="left:830px;top:192px;width:369px;height:296px;background:#fff;border:1px solid #ececf0;border-radius:3px"></div>
<div class="t" style="left:838px;top:184px;font-size:11.500px;line-height:16px;letter-spacing:0.37px;background:#fff;padding:0 3px">No selected element</div>
<div class="t" style="left:842.5px;top:207.0px;font-size:11.5px;line-height:16px;letter-spacing:0.68px;">Weight (%)</div>
<div class="a" style="left:1037px;top:214.0px;width:83px;height:1.5px;background:#d0d3da"></div>
<div class="a" style="left:1031.5px;top:208.7px;width:11.500px;height:11.500px;border:1px solid #c9ccd4;border-radius:50%;background:#fff"></div>
<div class="sp" style="left:1126px;top:205.5px;width:66px"><b>0,0000</b><i></i><u></u><svg width="7" height="14" viewBox="0 0 7 14"><path d="M1.500 4.700L3.500 2.700L5.500 4.700M1.500 9.300L3.500 11.300L5.500 9.300" fill="none" stroke="#4a4c54" stroke-width="1.100"/></svg></div>
<div class="t" style="left:842.5px;top:230.5px;font-size:11.5px;line-height:16px;letter-spacing:0.54px;">Min / max temperature (°c)</div>
<div class="sp" style="left:1087px;top:229.0px;width:49px"><b>0,00</b><i></i><u></u><svg width="7" height="14" viewBox="0 0 7 14"><path d="M1.500 4.700L3.500 2.700L5.500 4.700M1.500 9.300L3.500 11.300L5.500 9.300" fill="none" stroke="#4a4c54" stroke-width="1.100"/></svg></div>
<div class="sp" style="left:1142px;top:229.0px;width:50px"><b>0,00</b><i></i><u></u><svg width="7" height="14" viewBox="0 0 7 14"><path d="M1.500 4.700L3.500 2.700L5.500 4.700M1.500 9.300L3.500 11.300L5.500 9.300" fill="none" stroke="#4a4c54" stroke-width="1.100"/></svg></div>
<div class="t" style="left:842.5px;top:254.3px;font-size:11.5px;line-height:16px;letter-spacing:0.33px;">Min / max rainfall (mm/y)</div>
<div class="sp" style="left:1087px;top:252.8px;width:49px"><b>0,00</b><i></i><u></u><svg width="7" height="14" viewBox="0 0 7 14"><path d="M1.500 4.700L3.500 2.700L5.500 4.700M1.500 9.300L3.500 11.300L5.500 9.300" fill="none" stroke="#4a4c54" stroke-width="1.100"/></svg></div>
<div class="sp" style="left:1142px;top:252.8px;width:50px"><b>0,00</b><i></i><u></u><svg width="7" height="14" viewBox="0 0 7 14"><path d="M1.500 4.700L3.500 2.700L5.500 4.700M1.500 9.300L3.500 11.300L5.500 9.300" fill="none" stroke="#4a4c54" stroke-width="1.100"/></svg></div>
<div class="t" style="left:842.5px;top:277.9px;font-size:11.5px;line-height:16px;letter-spacing:0.49px;">Ground color influence / rand. (%)</div>
<div class="sp" style="left:1087px;top:276.4px;width:49px"><b>0,00</b><i></i><u></u><svg width="7" height="14" viewBox="0 0 7 14"><path d="M1.500 4.700L3.500 2.700L5.500 4.700M1.500 9.300L3.500 11.300L5.500 9.300" fill="none" stroke="#4a4c54" stroke-width="1.100"/></svg></div>
<div class="sp" style="left:1142px;top:276.4px;width:50px"><b>0,00</b><i></i><u></u><svg width="7" height="14" viewBox="0 0 7 14"><path d="M1.500 4.700L3.500 2.700L5.500 4.700M1.500 9.300L3.500 11.300L5.500 9.300" fill="none" stroke="#4a4c54" stroke-width="1.100"/></svg></div>
<div class="t" style="left:842.5px;top:301.5px;font-size:11.5px;line-height:16px;letter-spacing:0.32px;">Cluster size (m) / sharpness (%)</div>
<div class="sp" style="left:1087px;top:300.0px;width:49px"><b>0,00</b><i></i><u></u><svg width="7" height="14" viewBox="0 0 7 14"><path d="M1.500 4.700L3.500 2.700L5.500 4.700M1.500 9.300L3.500 11.300L5.500 9.300" fill="none" stroke="#4a4c54" stroke-width="1.100"/></svg></div>
<div class="sp" style="left:1142px;top:300.0px;width:50px"><b>0,00</b><i></i><u></u><svg width="7" height="14" viewBox="0 0 7 14"><path d="M1.500 4.700L3.500 2.700L5.500 4.700M1.500 9.300L3.500 11.300L5.500 9.300" fill="none" stroke="#4a4c54" stroke-width="1.100"/></svg></div>
<div class="t" style="left:842.5px;top:325.2px;font-size:11.5px;line-height:16px;letter-spacing:0.02px;">Spawn areas</div>
<div class="a" style="left:1031px;top:323.7px;width:161px;height:18px;background:#fff;border:1px solid #d9dce3;border-radius:2px"></div>
<div class="t" style="left:842.5px;top:348.8px;font-size:11.5px;line-height:16px;letter-spacing:0.42px;">Spawn angle min / max (°)</div>
<div class="sp" style="left:1087px;top:347.3px;width:49px"><b>0,00</b><i></i><u></u><svg width="7" height="14" viewBox="0 0 7 14"><path d="M1.500 4.700L3.500 2.700L5.500 4.700M1.500 9.300L3.500 11.300L5.500 9.300" fill="none" stroke="#4a4c54" stroke-width="1.100"/></svg></div>
<div class="sp" style="left:1142px;top:347.3px;width:50px"><b>0,00</b><i></i><u></u><svg width="7" height="14" viewBox="0 0 7 14"><path d="M1.500 4.700L3.500 2.700L5.500 4.700M1.500 9.300L3.500 11.300L5.500 9.300" fill="none" stroke="#4a4c54" stroke-width="1.100"/></svg></div>
<div class="t" style="left:842.5px;top:372.5px;font-size:11.5px;line-height:16px;letter-spacing:0.48px;">Spawn bending (%)</div>
<div class="a" style="left:1037px;top:379.5px;width:96px;height:1.5px;background:#d0d3da"></div>
<div class="a" style="left:1031.5px;top:374.2px;width:11.500px;height:11.500px;border:1px solid #c9ccd4;border-radius:50%;background:#fff"></div>
<div class="sp" style="left:1139.5px;top:371.0px;width:52.5px"><b>0,00</b><i></i><u></u><svg width="7" height="14" viewBox="0 0 7 14"><path d="M1.500 4.700L3.500 2.700L5.500 4.700M1.500 9.300L3.500 11.300L5.500 9.300" fill="none" stroke="#4a4c54" stroke-width="1.100"/></svg></div>
<div class="t" style="left:842.5px;top:396.1px;font-size:11.5px;line-height:16px;letter-spacing:0.34px;">Spawn bending randomness (%)</div>
<div class="a" style="left:1037px;top:403.1px;width:96px;height:1.5px;background:#d0d3da"></div>
<div class="a" style="left:1031.5px;top:397.8px;width:11.500px;height:11.500px;border:1px solid #c9ccd4;border-radius:50%;background:#fff"></div>
<div class="sp" style="left:1139.5px;top:394.6px;width:52.5px"><b>0,00</b><i></i><u></u><svg width="7" height="14" viewBox="0 0 7 14"><path d="M1.500 4.700L3.500 2.700L5.500 4.700M1.500 9.300L3.500 11.300L5.500 9.300" fill="none" stroke="#4a4c54" stroke-width="1.100"/></svg></div>
<div class="t" style="left:842.5px;top:419.8px;font-size:11.5px;line-height:16px;letter-spacing:0.49px;">Spawn depth in ground min / max (m)</div>
<div class="sp" style="left:1087px;top:418.3px;width:49px"><b>0,00</b><i></i><u></u><svg width="7" height="14" viewBox="0 0 7 14"><path d="M1.500 4.700L3.500 2.700L5.500 4.700M1.500 9.300L3.500 11.300L5.500 9.300" fill="none" stroke="#4a4c54" stroke-width="1.100"/></svg></div>
<div class="sp" style="left:1142px;top:418.3px;width:50px"><b>0,00</b><i></i><u></u><svg width="7" height="14" viewBox="0 0 7 14"><path d="M1.500 4.700L3.500 2.700L5.500 4.700M1.500 9.300L3.500 11.300L5.500 9.300" fill="none" stroke="#4a4c54" stroke-width="1.100"/></svg></div>
<div class="t" style="left:842.5px;top:442.0px;font-size:11.5px;line-height:16px;letter-spacing:0.25px;">Smaller at border</div>
<div class="a" style="left:1033px;top:444.0px;width:11px;height:11px;background:#fff;border:1px solid #c9ccd4;border-radius:2.500px"></div>
<div class="t" style="left:842.5px;top:464.0px;font-size:11.5px;line-height:16px;letter-spacing:0.41px;">Spawn scaling factor min / max (%)</div>
<div class="sp" style="left:1087px;top:462.5px;width:49px"><b>1,00</b><i></i><u></u><svg width="7" height="14" viewBox="0 0 7 14"><path d="M1.500 4.700L3.500 2.700L5.500 4.700M1.500 9.300L3.500 11.300L5.500 9.300" fill="none" stroke="#4a4c54" stroke-width="1.100"/></svg></div>
<div class="sp" style="left:1142px;top:462.5px;width:50px"><b>1,00</b><i></i><u></u><svg width="7" height="14" viewBox="0 0 7 14"><path d="M1.500 4.700L3.500 2.700L5.500 4.700M1.500 9.300L3.500 11.300L5.500 9.300" fill="none" stroke="#4a4c54" stroke-width="1.100"/></svg></div>
<div class="a" style="left:371px;top:672px;width:887px;height:24px;background:#f8f8fa"></div>
<svg style="left:1003px;top:679px;" width="14" height="14" viewBox="0 0 14 14"><circle cx="7" cy="7" r="5.800" fill="#fff" stroke="#35c4dc" stroke-width="1.800"/></svg>
<div class="a" style="left:1025px;top:674px;width:1px;height:22px;background:#ececf0"></div>
<div class="a" style="left:1108px;top:674px;width:1px;height:22px;background:#ececf0"></div>
<div class="a" style="left:1230px;top:674px;width:1px;height:22px;background:#ececf0"></div>
<div class="t" style="left:1036px;top:679.0px;font-size:12px;line-height:16px;letter-spacing:0.37px;">FPS =&nbsp; 25</div>
<div class="t" style="left:1119.5px;top:679.0px;font-size:12px;line-height:16px;letter-spacing:0.67px;">res = 1449 x 595</div>
<div class="t" style="left:1241px;top:679px;font-size:12px;line-height:16px;letter-spacing:.7px;width:17px;overflow:hidden">tim</div>
<div class="a" style="left:23px;top:696px;width:1235px;height:1px;background:#f2f2f5"></div>
<svg style="left:0;top:0" width="1280" height="720" viewBox="0 0 1280 720"><rect x="22.500" y="483" width="189" height="36" rx="18" fill="#f4a62a" fill-opacity=".28" stroke="#ee960f" stroke-width="3"/><rect x="22" y="632" width="38" height="38" rx="4" fill="#f4a62a" fill-opacity=".28" stroke="#ee960f" stroke-width="3"/><path d="M195 446L155 482" stroke="#ee960f" stroke-width="2" fill="none"/><path d="M147 606L60 642" stroke="#ee960f" stroke-width="2" fill="none"/><path d="M224 168L263 194" stroke="#ee960f" stroke-width="1" fill="none" opacity=".9"/><path d="M542 597L452 574" stroke="#ee960f" stroke-width="2" fill="none" opacity=".9"/><rect x="147" y="44" width="77.500" height="124.500" fill="#f09a1e" fill-opacity=".83"/><rect x="194" y="391.500" width="167" height="54.500" fill="#ee960f"/><rect x="146" y="570" width="167" height="36" fill="#ee960f"/><rect x="541" y="596" width="136" height="73" fill="#e8920c" fill-opacity=".88" stroke="#ee960f" stroke-width="1.500"/><g opacity=".82"><path d="M203 236.500C272 186 336 190 419 300" fill="none" stroke="#e48800" stroke-width="25"/><path d="M436 284.500L436.300 316.300L404 316Z" fill="#f3a02a" stroke="#e48800" stroke-width="1.500" stroke-linejoin="miter"/><path d="M203 236.500C272 186 336 190 419 300" fill="none" stroke="#f3a02a" stroke-width="21"/></g><g opacity=".82"><path d="M236.500 497C300 470 396 482 434 576" fill="none" stroke="#e48800" stroke-width="25"/><path d="M454 567L444 595.500L414 585Z" fill="#f3a02a" stroke="#e48800" stroke-width="1.500"/><path d="M236.500 497C300 470 396 482 434 576" fill="none" stroke="#f3a02a" stroke-width="21"/></g><polygon points="299.5,115.0 303.5,121.1 309.5,117.0 310.9,124.2 318.0,122.7 316.5,129.8 323.7,131.2 319.6,137.2 325.7,141.2 319.6,145.2 323.7,151.2 316.5,152.6 318.0,159.7 310.9,158.2 309.5,165.4 303.5,161.3 299.5,167.4 295.5,161.3 289.5,165.4 288.1,158.2 281.0,159.7 282.5,152.6 275.3,151.2 279.4,145.2 273.3,141.2 279.4,137.2 275.3,131.2 282.5,129.8 281.0,122.7 288.1,124.2 289.5,117.0 295.5,121.1" fill="#ee960f"/><polygon points="49.5,414.5 53.5,420.9 59.6,416.5 60.9,424.0 68.2,422.3 66.5,429.6 74.0,430.9 69.6,437.0 76.0,441.0 69.6,445.0 74.0,451.1 66.5,452.4 68.2,459.7 60.9,458.0 59.6,465.5 53.5,461.1 49.5,467.5 45.5,461.1 39.4,465.5 38.1,458.0 30.8,459.7 32.5,452.4 25.0,451.1 29.4,445.0 23.0,441.0 29.4,437.0 25.0,430.9 32.5,429.6 30.8,422.3 38.1,424.0 39.4,416.5 45.5,420.9" fill="#ee960f"/><polygon points="87.0,664.0 91.1,670.4 97.3,666.1 98.7,673.5 106.1,671.9 104.5,679.3 111.9,680.7 107.6,686.9 114.0,691.0 107.6,695.1 111.9,701.3 104.5,702.7 106.1,710.1 98.7,708.5 97.3,715.9 91.1,711.6 87.0,718.0 82.9,711.6 76.7,715.9 75.3,708.5 67.9,710.1 69.5,702.7 62.1,701.3 66.4,695.1 60.0,691.0 66.4,686.9 62.1,680.7 69.5,679.3 67.9,671.9 75.3,673.5 76.7,666.1 82.9,670.4" fill="#ee960f"/><polygon points="473.0,619.0 477.1,625.4 483.3,621.1 484.7,628.5 492.1,626.9 490.5,634.3 497.9,635.7 493.6,641.9 500.0,646.0 493.6,650.1 497.9,656.3 490.5,657.7 492.1,665.1 484.7,663.5 483.3,670.9 477.1,666.6 473.0,673.0 468.9,666.6 462.7,670.9 461.3,663.5 453.9,665.1 455.5,657.7 448.1,656.3 452.4,650.1 446.0,646.0 452.4,641.9 448.1,635.7 455.5,634.3 453.9,626.9 461.3,628.5 462.7,621.1 468.9,625.4" fill="#ee960f" stroke="#fff" stroke-width="1.200"/></svg>
<div class="co" style="left:284.5px;top:129px;width:30px;text-align:center;font-weight:bold;font-size:17px;line-height:24px">3</div>
<div class="co" style="left:34.5px;top:429px;width:30px;text-align:center;font-weight:bold;font-size:17px;line-height:24px">2</div>
<div class="co" style="left:72px;top:679px;width:30px;text-align:center;font-weight:bold;font-size:17px;line-height:24px">1</div>
<div class="co" style="left:458px;top:634px;width:30px;text-align:center;font-weight:bold;font-size:17px;line-height:24px">4</div>
<div class="co" style="left:147px;top:50.500px;width:77px;text-align:center;font-size:15.700px;line-height:18.400px">Drag’n<br>drop a<br>plant<br>into the<br>biome<br>window</div>
<div class="co" style="left:201px;top:399.500px;font-size:15.300px;line-height:18.300px">Double click to open<br>the biome document</div>
<div class="co" style="left:152.500px;top:578.300px;font-size:15.100px;line-height:18.500px">Create a biome</div>
<div class="co" style="left:548px;top:604px;font-size:15.500px;line-height:18.200px">Drag’n drop the<br>biome into the<br>main view</div>
</body></html>
